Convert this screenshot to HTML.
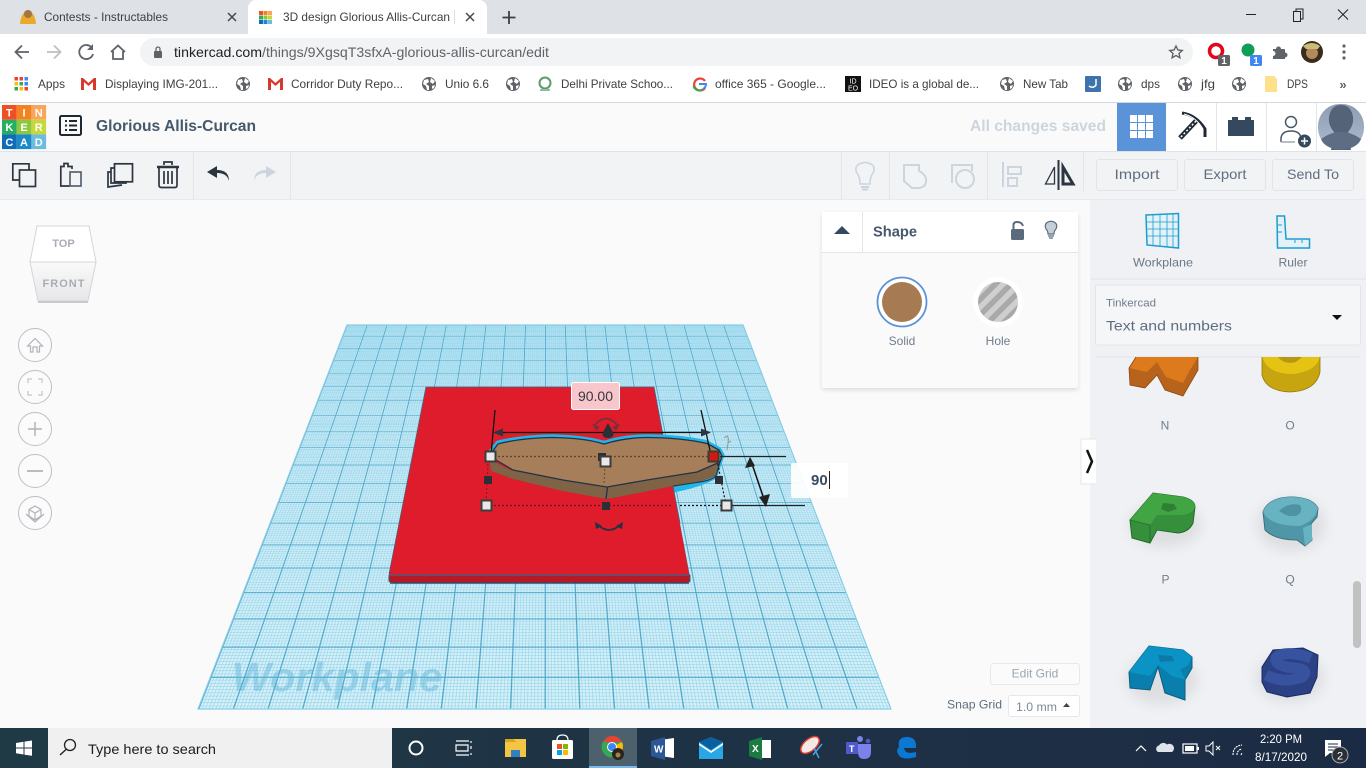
<!DOCTYPE html>
<html><head><meta charset="utf-8"><title>3D design Glorious Allis-Curcan | Tinkercad</title>
<style>
html,body{margin:0;padding:0;width:1366px;height:768px;overflow:hidden;background:#fafafa;font-family:"Liberation Sans",sans-serif}
.a{position:absolute}
#plane{left:0;top:0;width:1000px;height:1000px;transform-origin:0 0;
transform:matrix3d(0.396,0,0,0,-0.23386,0.08014,0,-0.0004286,0,0,1,0,347,325,0,1);
background-image:
linear-gradient(90deg,#4ea8ca 0,#4ea8ca 1.7px,transparent 1.7px),
linear-gradient(180deg,#4ea8ca 0,#4ea8ca 2.2px,transparent 2.2px),
linear-gradient(90deg,#97d5ea 0,#97d5ea 1.5px,transparent 1.5px),
linear-gradient(180deg,#97d5ea 0,#97d5ea 1.5px,transparent 1.5px),
linear-gradient(180deg,#acdff1 0,#c6e9f5 45%,#d8f1f9 100%);
background-size:50px 50px,50px 50px,5px 5px,5px 5px,1000px 1000px;}
svg{position:absolute;left:0;top:0}
text{font-family:"Liberation Sans",sans-serif}
</style></head><body>
<div class="a" style="left:0;top:0;width:1366px;height:34px;background:#dee1e6"></div>
<div class="a" style="left:0;top:34px;width:1366px;height:68px;background:#fff"></div>
<div class="a" style="left:248px;top:0;width:239px;height:35px;background:#fff;border-radius:8px 8px 0 0"></div>
<div class="a" style="left:140px;top:38px;width:1053px;height:28px;background:#f1f3f4;border-radius:14px"></div>
<div class="a" style="left:0;top:102px;width:1366px;height:1px;background:#d5d7da"></div>
<div class="a" style="left:0;top:103px;width:1366px;height:48px;background:#fafafa"></div>
<div class="a" style="left:0;top:151px;width:1366px;height:49px;background:#f2f3f5;border-top:1px solid #dfe2e7;border-bottom:1px solid #e8eaee;box-sizing:border-box"></div>
<div class="a" style="left:0;top:200px;width:1090px;height:528px;background:#fafafa;overflow:hidden">
<div class="a" style="left:0;top:-200px;width:1366px;height:768px;">
<div id="plane" class="a"></div></div></div>
<div class="a" style="left:1090px;top:200px;width:276px;height:528px;background:#f0f1f4"></div>
<svg width="1366" height="768" viewBox="0 0 1366 768" xmlns="http://www.w3.org/2000/svg">
<defs>
<g id="globe"><circle cx="0" cy="0" r="7" fill="#5f6368"/><path d="M-5-4 L-1-5 L0-2 L-3 0 L0 2 L0 6 L-2 6 L-3 2 L-6 0Z M2-6 L6-3 L4 0 L1-2Z M3 2 L6 1 L5 4 L3 5Z" fill="#fff"/></g>
<g id="gm"><rect x="0" y="0" width="15" height="12" fill="#fff"/><path d="M0 0 V12 H3 V4 L7.500 8 L12 4 V12 H15 V0 H13 L7.500 5 L2 0Z" fill="#d8392e"/></g>
<filter id="bl" x="-50%" y="-50%" width="200%" height="200%"><feGaussianBlur stdDeviation="7"/></filter>
<pattern id="hs" width="11" height="11" patternUnits="userSpaceOnUse" patternTransform="rotate(-45)"><rect width="11" height="11" fill="#cfcfcf"/><rect width="11" height="5.500" fill="#a9a9a9"/></pattern>
<linearGradient id="tb" x1="0" x2="1"><stop offset="0" stop-color="#203a45"/><stop offset="1" stop-color="#1c2b45"/></linearGradient>
<linearGradient id="av" x1="0" x2="0" y1="0" y2="1"><stop offset="0" stop-color="#8d9cb3"/><stop offset="1" stop-color="#aebccf"/></linearGradient>
<linearGradient id="cf" x1="0" x2="0" y1="0" y2="1"><stop offset="0" stop-color="#fafafa"/><stop offset="1" stop-color="#e6e6e8"/></linearGradient>
</defs>

<!-- tabs -->
<circle cx="28" cy="17" r="7" fill="#c9e4ef"/><path d="M20 24 Q21 12 28 11 Q35 12 36 24Z" fill="#e9a92b"/><circle cx="28" cy="14" r="4" fill="#a5743f"/>
<text x="44" y="21" font-size="12" fill="#3c4043" textLength="124" lengthAdjust="spacingAndGlyphs">Contests - Instructables</text>
<path d="M228 13 l8 8 m0-8 l-8 8" stroke="#45484c" stroke-width="1.500"/>
<g><rect x="259" y="11" width="4" height="4" fill="#f04e23"/><rect x="263.500" y="11" width="4" height="4" fill="#f58220"/><rect x="268" y="11" width="4" height="4" fill="#f9a65a"/><rect x="259" y="15.500" width="4" height="4" fill="#27ae60"/><rect x="263.500" y="15.500" width="4" height="4" fill="#8dc63f"/><rect x="268" y="15.500" width="4" height="4" fill="#c5d93a"/><rect x="259" y="20" width="4" height="4" fill="#0f6cb6"/><rect x="263.500" y="20" width="4" height="4" fill="#1c89c9"/><rect x="268" y="20" width="4" height="4" fill="#6cbce0"/></g>
<text x="283" y="21" font-size="12" fill="#3c4043" textLength="167" lengthAdjust="spacingAndGlyphs">3D design Glorious Allis-Curcan</text>
<rect x="454" y="10" width="1" height="14" fill="#f3dcc8"/>
<path d="M466 13 l8 8 m0-8 l-8 8" stroke="#45484c" stroke-width="1.500"/>
<path d="M509 11 v13 M502.500 17.500 h13" stroke="#3c4043" stroke-width="1.800"/>
<!-- window controls -->
<path d="M1246 14.500 h10" stroke="#222" stroke-width="1"/>
<path d="M1293.500 11.500 h7 v10 h-7z M1296 11.500 v-2.500 h7 v10 h-2.500" fill="none" stroke="#222"/>
<path d="M1338 9.500 l10 10 m0-10 l-10 10" stroke="#222" stroke-width="1"/>

<!-- nav -->
<path d="M29 52 H16 M22 45.500 L15.500 52 L22 58.500" fill="none" stroke="#5f6368" stroke-width="1.800"/>
<path d="M47 52 H60 M54 45.500 L60.500 52 L54 58.500" fill="none" stroke="#bcc0c4" stroke-width="1.800"/>
<path d="M92 48 A7 7 0 1 0 93 54" fill="none" stroke="#5f6368" stroke-width="1.800"/><path d="M93 44 v6 h-6z" fill="#5f6368"/>
<path d="M111 52 L118 45.500 L125 52 M113 51 V59 H123 V51" fill="none" stroke="#5f6368" stroke-width="1.800"/>
<rect x="154" y="51" width="8" height="7" rx="1" fill="#5f6368"/><path d="M156 51 v-2 a2 2 0 0 1 4 0 v2" fill="none" stroke="#5f6368" stroke-width="1.300"/>
<text x="174" y="57" font-size="14" fill="#202124" textLength="375" lengthAdjust="spacingAndGlyphs">tinkercad.com<tspan fill="#5f6368">/things/9XgsqT3sfxA-glorious-allis-curcan/edit</tspan></text>
<path d="M1176 46 l1.900 4 4.300.5 -3.200 2.900 .9 4.300 -3.900-2.200 -3.900 2.200 .9-4.300 -3.200-2.900 4.300-.5z" fill="none" stroke="#5f6368" stroke-width="1.400"/>
<circle cx="1216" cy="51" r="6.500" fill="none" stroke="#e0081a" stroke-width="3.500"/><rect x="1218" y="55" width="12" height="11" rx="1.500" fill="#5f6368"/><text x="1224" y="64" font-size="10" font-weight="bold" fill="#fff" text-anchor="middle">1</text>
<circle cx="1248" cy="50" r="6.500" fill="#0f9d58"/><rect x="1250" y="55" width="12" height="11" rx="1.500" fill="#4285f4"/><text x="1256" y="64" font-size="10" font-weight="bold" fill="#fff" text-anchor="middle">1</text>
<path d="M1273 49 h3 a2.500 2.500 0 0 1 5 0 h3 a1 1 0 0 1 1 1 v2.500 a2.500 2.500 0 0 1 0 5 v1.500 h-12 v-3 a2.500 2.500 0 0 0 0-5z" fill="#5f6368"/>
<circle cx="1312" cy="52" r="11" fill="#3a2c1a"/><circle cx="1312" cy="53" r="6" fill="#b48a5c"/><path d="M1303 46 q9-6 17 0 l-2 3 h-12z" fill="#c9bd7a"/>
<circle cx="1344" cy="46" r="1.600" fill="#5f6368"/><circle cx="1344" cy="52" r="1.600" fill="#5f6368"/><circle cx="1344" cy="58" r="1.600" fill="#5f6368"/>

<!-- bookmarks -->
<g><rect x="14.500" y="77" width="3.500" height="3.500" fill="#ea4335"/><rect x="19.500" y="77" width="3.500" height="3.500" fill="#ea4335"/><rect x="24.500" y="77" width="3.500" height="3.500" fill="#4285f4"/><rect x="14.500" y="82" width="3.500" height="3.500" fill="#fbbc04"/><rect x="19.500" y="82" width="3.500" height="3.500" fill="#34a853"/><rect x="24.500" y="82" width="3.500" height="3.500" fill="#4285f4"/><rect x="14.500" y="87" width="3.500" height="3.500" fill="#34a853"/><rect x="19.500" y="87" width="3.500" height="3.500" fill="#fbbc04"/><rect x="24.500" y="87" width="3.500" height="3.500" fill="#ea4335"/></g>
<g font-size="12" fill="#3c4043">
<text x="38" y="88" textLength="27" lengthAdjust="spacingAndGlyphs">Apps</text>
<text x="105" y="88" textLength="113" lengthAdjust="spacingAndGlyphs">Displaying IMG-201...</text>
<text x="291" y="88" textLength="112" lengthAdjust="spacingAndGlyphs">Corridor Duty Repo...</text>
<text x="445" y="88" textLength="44" lengthAdjust="spacingAndGlyphs">Unio 6.6</text>
<text x="561" y="88" textLength="112" lengthAdjust="spacingAndGlyphs">Delhi Private Schoo...</text>
<text x="715" y="88" textLength="111" lengthAdjust="spacingAndGlyphs">office 365 - Google...</text>
<text x="869" y="88" textLength="110" lengthAdjust="spacingAndGlyphs">IDEO is a global de...</text>
<text x="1023" y="88" textLength="45" lengthAdjust="spacingAndGlyphs">New Tab</text>
<text x="1141" y="88" textLength="19" lengthAdjust="spacingAndGlyphs">dps</text>
<text x="1201" y="88" textLength="14" lengthAdjust="spacingAndGlyphs">jfg</text>
<text x="1287" y="88" textLength="21" lengthAdjust="spacingAndGlyphs">DPS</text>
</g>
<use href="#gm" x="81" y="78"/><use href="#gm" x="268" y="78"/>
<use href="#globe" x="243" y="84"/><use href="#globe" x="429" y="84"/><use href="#globe" x="513" y="84"/><use href="#globe" x="1007" y="84"/><use href="#globe" x="1125" y="84"/><use href="#globe" x="1185" y="84"/><use href="#globe" x="1239" y="84"/>
<circle cx="545" cy="83" r="5.500" fill="none" stroke="#5a9c6a" stroke-width="2"/><path d="M540 90 h10" stroke="#8fc0a0" stroke-width="2"/>
<path d="M705 81 A6 6 0 1 0 705 88" fill="none" stroke="#ea4335" stroke-width="2.200"/><path d="M699 84 h7 a6 6 0 0 1-3 5" fill="none" stroke="#4285f4" stroke-width="2"/><path d="M693.500 86 a6 6 0 0 0 9 3.500" fill="none" stroke="#34a853" stroke-width="2"/>
<rect x="845" y="76" width="16" height="16" fill="#111"/><text x="853" y="83.500" font-size="7" fill="#fff" text-anchor="middle">ID</text><text x="853" y="90.500" font-size="7" fill="#fff" text-anchor="middle">EO</text>
<rect x="1085" y="76" width="16" height="16" rx="1" fill="#3d74ad"/><path d="M1089 86 q4 3 7-1 l0-6" fill="none" stroke="#fff" stroke-width="1.500"/>
<path d="M1265 76 h9 l3 3 v13 h-12z" fill="#fdd663" opacity=".75"/>
<text x="1343" y="89" font-size="13" font-weight="bold" fill="#5f6368" text-anchor="middle">»</text>

<!-- header -->
<g font-size="11" font-weight="bold" fill="#fff" text-anchor="middle">
<rect x="2" y="105" width="14.700" height="14.700" fill="#f04e23"/><rect x="16.700" y="105" width="14.700" height="14.700" fill="#f58220"/><rect x="31.400" y="105" width="14.700" height="14.700" fill="#f9a65a"/>
<rect x="2" y="119.700" width="14.700" height="14.700" fill="#27ae60"/><rect x="16.700" y="119.700" width="14.700" height="14.700" fill="#8dc63f"/><rect x="31.400" y="119.700" width="14.700" height="14.700" fill="#c5d93a"/>
<rect x="2" y="134.400" width="14.700" height="14.700" fill="#0f6cb6"/><rect x="16.700" y="134.400" width="14.700" height="14.700" fill="#1c89c9"/><rect x="31.400" y="134.400" width="14.700" height="14.700" fill="#6cbce0"/>
<text x="9.300" y="116.500">T</text><text x="24" y="116.500">I</text><text x="38.700" y="116.500">N</text>
<text x="9.300" y="131">K</text><text x="24" y="131">E</text><text x="38.700" y="131">R</text>
<text x="9.300" y="146">C</text><text x="24" y="146">A</text><text x="38.700" y="146">D</text></g>
<rect x="60" y="116" width="21" height="19" rx="1.500" fill="none" stroke="#1f2933" stroke-width="2"/>
<path d="M65 121 h2 m2 0 h8 M65 125.500 h2 m2 0 h8 M65 130 h2 m2 0 h8" stroke="#1f2933" stroke-width="2"/>
<text x="96" y="131" font-size="16" font-weight="bold" fill="#46586a" textLength="160" lengthAdjust="spacingAndGlyphs">Glorious Allis-Curcan</text>
<text x="970" y="131" font-size="16" font-weight="bold" fill="#ccd5dd" textLength="136" lengthAdjust="spacingAndGlyphs">All changes saved</text>
<rect x="1117" y="103" width="49" height="48" fill="#5b93d9"/>
<g fill="#fff"><rect x="1130" y="115" width="7" height="7"/><rect x="1138" y="115" width="7" height="7"/><rect x="1146" y="115" width="7" height="7"/><rect x="1130" y="123" width="7" height="7"/><rect x="1138" y="123" width="7" height="7"/><rect x="1146" y="123" width="7" height="7"/><rect x="1130" y="131" width="7" height="7"/><rect x="1138" y="131" width="7" height="7"/><rect x="1146" y="131" width="7" height="7"/></g>
<rect x="1167" y="103" width="49" height="48" fill="#fff"/><rect x="1217" y="103" width="49" height="48" fill="#fff"/><rect x="1267" y="103" width="49" height="48" fill="#fff"/><rect x="1317" y="103" width="49" height="48" fill="#fff"/>
<rect x="1216" y="103" width="1" height="48" fill="#e3e5e9"/><rect x="1266" y="103" width="1" height="48" fill="#e3e5e9"/><rect x="1316" y="103" width="1" height="48" fill="#e3e5e9"/>
<path d="M1182 113 Q1196 115 1205 129 L1205 137" fill="none" stroke="#1f2933" stroke-width="3"/>
<path d="M1184 114 Q1196 117 1203 129" fill="none" stroke="#fff" stroke-width="1"/>
<path d="M1196 121 L1180 138" stroke="#1f2933" stroke-width="5"/><path d="M1196 121 L1180 138" stroke="#fff" stroke-width="1.500" stroke-dasharray="2 2"/>
<path d="M1228 136 V120 H1232 V117 H1238 V120 H1245 V117 H1251 V120 H1254 V136Z" fill="#34495f"/>
<circle cx="1291" cy="122" r="5.500" fill="none" stroke="#46586a" stroke-width="1.500"/>
<path d="M1281 142 v-4 q1-7 10-7 q9 0 10 7" fill="none" stroke="#46586a" stroke-width="1.500"/><path d="M1281 142 h14" stroke="#9aa7b5" stroke-width="1.500"/>
<circle cx="1304.500" cy="141" r="6.500" fill="#34495f"/><path d="M1304.500 137.500 v7 M1301 141 h7" stroke="#fff" stroke-width="1.500"/>
<rect x="1318" y="104" width="46" height="46" rx="22" fill="url(#av)"/>
<path d="M1331 150 Q1334 136 1334 132 Q1328 125 1329 117 Q1331 105 1341 105 Q1351 105 1353 117 Q1354 125 1348 132 Q1348 136 1351 150Z" fill="#556378"/>
<path d="M1321 139 Q1328 134 1336 132 L1346 132 Q1354 134 1361 139 Q1358 148 1341 150 Q1324 148 1321 139Z" fill="#5e6d84"/>

<!-- toolbar -->
<g fill="#e3e5e9"><rect x="193" y="152" width="1" height="47"/><rect x="290" y="152" width="1" height="47"/><rect x="841" y="152" width="1" height="47"/><rect x="889" y="152" width="1" height="47"/><rect x="987" y="152" width="1" height="47"/><rect x="1083" y="152" width="1" height="39"/></g>
<g fill="none" stroke="#2c3640" stroke-width="1.700">
<path d="M29 170 V163.800 H12.800 V180 H19"/><rect x="19.500" y="170" width="16" height="16.500"/>
<path d="M72 169 V166.500 H68 V163.500 H64 V166.500 H60.800 V186 H70"/><rect x="70" y="172" width="11" height="14" stroke="#55626f"/>
<rect x="114.500" y="163.800" width="18" height="18"/><path d="M114.500 168 H111 V183 H126 V182 M111 172 H108 V187 L122 185"/>
<path d="M159 168 V185 Q159 187.500 161.500 187.500 H175 Q177 187.500 177 185 V168"/><path d="M157 167 H179" stroke-width="2.500"/><path d="M164 165 V162 H172 V165 M164 171 V184 M168 171 V184 M172 171 V184"/>
</g>
<path d="M229 181 Q227 173 217 173 V178 L207 172 L217 166 V170 Q229 170 229 181Z" fill="#2c3640"/>
<path d="M276 181 Q274 173 264 173 V178 L254 172 L264 166 V170 Q276 170 276 181Z" fill="#ccd5dd" transform="matrix(-1 0 0 1 530 0)"/>
<g fill="none" stroke="#ccd5dd" stroke-width="2">
<path d="M860 184 Q860 177 857 173 Q854 167 859 164 Q865 161 871 164 Q876 167 873 173 Q870 177 870 184Z" stroke-width="1.600"/><path d="M861 187 h8 M862 189.500 h6"/>
<path d="M904 165 H919 V171 Q927 175 926 182 Q925 188 917 188 H912 L904 181Z"/>
<path d="M952 183 V165 H972 V171"/><circle cx="965" cy="179" r="9"/>
<path d="M1003 162 V187" stroke-width="2"/><rect x="1008" y="167" width="13" height="7"/><rect x="1008" y="178" width="9" height="8"/>
</g>
<path d="M1058.500 160 V190" stroke="#2c3640" stroke-width="2"/>
<path d="M1054.500 167 L1045.500 184 H1054.500Z" fill="none" stroke="#2c3640" stroke-width="1.300"/><path d="M1063 167 L1073 184 H1063Z" fill="none" stroke="#2c3640" stroke-width="3"/>
<g fill="#f2f3f5" stroke="#e1e4e8"><rect x="1096.500" y="159.500" width="81" height="31" rx="3"/><rect x="1184.500" y="159.500" width="81" height="31" rx="3"/><rect x="1272.500" y="159.500" width="81" height="31" rx="3"/></g>
<g font-size="14" fill="#5f6f7f" text-anchor="middle"><text x="1137" y="179" textLength="45" lengthAdjust="spacingAndGlyphs">Import</text><text x="1225" y="179" textLength="43" lengthAdjust="spacingAndGlyphs">Export</text><text x="1313" y="179" textLength="52" lengthAdjust="spacingAndGlyphs">Send To</text></g>

<!-- canvas left -->
<path d="M347 325 H743 L891 709 H198Z" fill="none" stroke="#86cce5" stroke-width="1.200"/>
<text x="232" y="691" font-size="41" font-weight="bold" font-style="italic" fill="#5fb3d6" fill-opacity=".45" textLength="210" lengthAdjust="spacingAndGlyphs">Workplane</text>
<path d="M37 226 H89 L96 262 H30Z" fill="#fff" stroke="#d4d5d8"/><path d="M30 262 H96 L88 301 H38Z" fill="url(#cf)" stroke="#d4d5d8"/><path d="M38 302 H88" stroke="#c8c9cc" stroke-width="2"/>
<text x="63.500" y="247" font-size="11" font-weight="bold" fill="#a8adb5" text-anchor="middle">TOP</text>
<text x="63.500" y="287" font-size="11" font-weight="bold" fill="#a8adb5" text-anchor="middle" textLength="42">FRONT</text>
<g fill="#fbfbfb" stroke="#bcc0c6" stroke-width="1"><circle cx="35" cy="345" r="16.500"/><circle cx="35" cy="387" r="16.500"/><circle cx="35" cy="429" r="16.500"/><circle cx="35" cy="471" r="16.500"/><circle cx="35" cy="513" r="16.500"/></g>
<g fill="none" stroke="#b0b4ba" stroke-width="1.200">
<path d="M27.500 346 L35 338.500 L42.500 346 H39.500 V352 H37 V347 H33 V352 H30.500 V346Z"/>
<path d="M28 383 v-4 h4 M38 379 h4 v4 M42 391 v4 h-4 M32 395 h-4 v-4" stroke-width="1.500" stroke="#ccd0d5"/>
<path d="M28 429 H42 M35 422 V436" stroke-width="1.500"/><path d="M27 471 H43" stroke-width="1.800"/>
<path d="M35 506 L41 509.500 V516 L35 520 L29 516 V509.500Z M29 509.500 L35 513 L41 509.500 M35 513 V520 M26 514 L35 522 L44 514"/>
</g>

<!-- plate -->
<path d="M389 574 L389 581 L392 583 H688 L690 581 L690 574Z" fill="#b71826"/>
<path d="M426 387 H654 L689 574 H389Z" fill="#de1c2c"/>
<path d="M426 387 H654 M654 387 L689 574 M426 387 L389 574" fill="none" stroke="#4a6080" stroke-width=".8"/>
<path d="M389 575 H690" stroke="#5c5a78" stroke-width="1.500"/>
<path d="M390 583 H689" stroke="#2f4a68" stroke-width="1.500"/>
<path d="M389 575 V581 L391 583 M690 575 V581 L688 583" fill="none" stroke="#3c5a78"/>

<!-- heart -->
<path d="M487 454 L497 441.500 Q520 435.500 553 435 Q585 436 604 441.500 Q625 435 647 435 Q680 435 707 441 L720 448 L724 455 L720 466 L716 478 Q705 484 690 488 L673 492 L673 480 L620 470 L500 460Z" fill="#20b7e8" stroke="#20b7e8" stroke-width="1.500"/>
<path d="M489 459 L491 471 L513 479 L563 491 L607 499 L673 487 L700 482 L716 476 L720 461 L700 470 L650 480 L607 486 L560 478 L510 470Z" fill="#7e6346"/>
<path d="M673 486 L689 574 L660 574 L600 540 L608 499Z" fill="#de1c2c"/>
<path d="M673 486 L680 523" stroke="#4a6080" stroke-width=".8"/>
<path d="M489 456 L498 444 Q520 438 553 437.500 Q585 438 604 444 Q625 437.500 647 437.500 Q680 437.500 707 443.500 L719 450 L722 456 L720 462 L697 472 L647 480 L607 487 L563 480 L513 470 Z" fill="#a67e5a" stroke="#243247" stroke-width="1.300"/>
<path d="M607.500 487 L606 499" stroke="#243247" stroke-width="1.300"/>
<path d="M673 486 L700 482 Q712 480 716 476 L720 462" fill="none" stroke="#243247" stroke-width="1"/>

<!-- gizmo -->
<g fill="none">
<path d="M490 456.500 H713" stroke="#5b4630" stroke-width="1.200" stroke-dasharray="2 2"/>
<path d="M490 505.500 H604" stroke="#5a1820" stroke-width="1.200" stroke-dasharray="2 2"/>
<path d="M609 505.500 H672" stroke="#5a1820" stroke-width="1.200" stroke-dasharray="2 2"/>
<path d="M680 505.500 H726" stroke="#111" stroke-width="1.200" stroke-dasharray="2 2"/>
<path d="M488 460 L486 505" stroke="#8a2028" stroke-width="1.200" stroke-dasharray="2 2"/>
<path d="M717 460 L726 505" stroke="#111" stroke-width="1.200" stroke-dasharray="2 2"/>
<path d="M605 465 L604 485" stroke="#6a5338" stroke-width="1.200" stroke-dasharray="2 2"/>
<path d="M495 410 L491 455 M701 410 L711 455" stroke="#111" stroke-width="1.300"/>
<path d="M495 432.500 H709" stroke="#111" stroke-width="1.300"/>
<path d="M720 456.500 H786 M730 505.500 H805" stroke="#222" stroke-width="1.300"/>
<path d="M750 458 L766 505" stroke="#111" stroke-width="1.500"/>
<path d="M594 426 Q606 411 618 426" stroke="#7d2f38" stroke-width="1.800"/>
<path d="M597 524 Q609 536 621 524" stroke="#26323f" stroke-width="1.700"/>
<path d="M727 450 L728 443 Q729 437 727 436 L724 438 M728 443 L731 441" stroke="#8e949c" stroke-width="1"/>
</g>
<path d="M493 432.500 L503 428.500 V436.500Z M711 432.500 L701 428.500 V436.500Z" fill="#2b3642"/>
<path d="M750 457 L745 468 L755 466Z M766 507 L759 497 L770 494Z" fill="#222"/>
<path d="M592 424 L596 431 L600 427Z M620 424 L616 431 L612 427Z" fill="#7d2f38"/><path d="M595 522 L596 529 L602 526Z M623 522 L622 529 L616 526Z" fill="#26323f"/>
<path d="M608 423 L613.500 433 Q614 438 608 438 Q602 438 602.500 433Z" fill="#2c3036"/>
<rect x="484" y="476" width="8" height="8" fill="#2c3036"/><rect x="715" y="476" width="8" height="8" fill="#2c3036"/><rect x="602" y="502" width="8" height="8" fill="#2c3036"/><rect x="598" y="453" width="8" height="8" fill="#2c3036"/>
<g fill="#e8e8e8" stroke="#3c3c3c" stroke-width="2"><rect x="485.500" y="451.500" width="10" height="10"/><rect x="600.500" y="456.500" width="10" height="10"/><rect x="481.500" y="500.500" width="10" height="10"/><rect x="721.500" y="500.500" width="10" height="10"/></g>
<rect x="708.500" y="451.500" width="10" height="10" fill="#d4190e" stroke="#3c3c3c" stroke-width="2"/>
<rect x="571.500" y="382.500" width="48" height="27" rx="2" fill="#f8c6cb" stroke="#fff"/>
<text x="595.500" y="401" font-size="14" fill="#333a44" text-anchor="middle">90.00</text>
<rect x="791" y="463" width="57" height="35" rx="2" fill="#fff" fill-opacity=".92"/>
<text x="811" y="485" font-size="15" font-weight="bold" fill="#3c4c5f">90</text><rect x="829" y="471" width="1" height="18" fill="#222"/>

<!-- shape panel -->
<rect x="822" y="214" width="256" height="176" rx="2" fill="#000" opacity=".12" style="filter:blur(2px)"/>
<rect x="822" y="212" width="256" height="176" rx="2" fill="#fafafa"/>
<path d="M822 252 V214 Q822 212 824 212 H1076 Q1078 212 1078 214 V252Z" fill="#fff"/>
<path d="M822 252.500 H1078" stroke="#e3e5e9"/><path d="M862.500 212 V252" stroke="#e3e5e9"/>
<path d="M834 234 L842 226 L850 234Z" fill="#34495f"/>
<text x="873" y="236.500" font-size="14.500" font-weight="bold" fill="#46586a" textLength="44" lengthAdjust="spacingAndGlyphs">Shape</text>
<rect x="1011" y="229" width="13" height="11" rx="1.500" fill="#5a6b7d"/><path d="M1013.500 229 V225 Q1013.500 222 1017 222 Q1022 222 1023 226" fill="none" stroke="#5a6b7d" stroke-width="2"/>
<path d="M1048 234 Q1048 231 1046 229 Q1044 225 1047 222.500 Q1051 220 1055 222.500 Q1058 225 1056 229 Q1054 231 1054 234Z" fill="#c5cdd6" stroke="#5a6b7d" stroke-width="1.200"/><path d="M1048 236 h6 M1049 238 h4" stroke="#5a6b7d" stroke-width="1.200"/>
<circle cx="902" cy="302" r="24.500" fill="#fff" stroke="#5b93d9" stroke-width="1.800"/><circle cx="902" cy="302" r="20" fill="#a67a52"/>
<circle cx="998" cy="302" r="25" fill="#fff"/><circle cx="998" cy="302" r="20" fill="url(#hs)"/>
<text x="902" y="345" font-size="12" fill="#6f7d8b" text-anchor="middle">Solid</text><text x="998" y="345" font-size="12" fill="#6f7d8b" text-anchor="middle">Hole</text>

<!-- bottom canvas controls -->
<rect x="990.500" y="663.500" width="89" height="21" rx="3" fill="#fbfbfb" stroke="#e6e8ec"/>
<text x="1035" y="677.500" font-size="12" fill="#9ba6b3" text-anchor="middle">Edit Grid</text>
<text x="947" y="708.500" font-size="12" fill="#5f6f7f" textLength="55" lengthAdjust="spacingAndGlyphs">Snap Grid</text>
<rect x="1008.500" y="695.500" width="71" height="21" rx="2" fill="#fff" stroke="#e6e8ec"/>
<text x="1016" y="711" font-size="12" fill="#7d8995" textLength="41" lengthAdjust="spacingAndGlyphs">1.0 mm</text>
<path d="M1063 707 L1066.500 703 L1070 707Z" fill="#444"/>
<!-- collapse tab -->
<path d="M1096 439 H1081 V484 H1096" fill="#fff" stroke="#e3e5e9"/>
<path d="M1087 450 L1092 461.500 L1087 473" fill="none" stroke="#111" stroke-width="2.500"/>

<!-- right panel -->
<path d="M1090 279 H1366 M1095 357 H1360" stroke="#dfe2e7"/>
<g fill="none" stroke="#1d9ccf" stroke-width="1.500">
<path d="M1146 215 L1178.500 213.500 V248 L1147 245Z" fill="#e2f2f8"/>
<path d="M1146 222 H1178 M1146.500 229 H1178 M1147 236 H1178 M1153 214.500 V246 M1160 214 V246.500 M1167 214 V247 M1173 214 V247.500" stroke-width=".8"/>
<path d="M1277 216 H1284.500 L1286 239 H1309.500 V248 H1277.500Z" fill="#e2f2f8"/>
<path d="M1278 225 h4 M1278 232 h4 M1295 240 v3 M1302 240 v3" stroke-width="1"/>
</g>
<g font-size="12" fill="#6a7886" text-anchor="middle"><text x="1163" y="266.500" textLength="60" lengthAdjust="spacingAndGlyphs">Workplane</text><text x="1293" y="266.500" textLength="29" lengthAdjust="spacingAndGlyphs">Ruler</text></g>
<rect x="1095.500" y="285" width="265" height="60" rx="2" fill="#f5f6f8" stroke="#e3e5e9"/>
<text x="1106" y="306.500" font-size="11" fill="#6f7d8b" textLength="50" lengthAdjust="spacingAndGlyphs">Tinkercad</text>
<text x="1106" y="330.500" font-size="14" fill="#5f6f7f" textLength="126" lengthAdjust="spacingAndGlyphs">Text and numbers</text>
<path d="M1332 315 H1342 L1337 320Z" fill="#111"/>

<!-- letters -->
<g>
<path d="M1129 368 L1136 357 H1198 V370 L1183 396 L1165 390 L1157 375 L1145 388 L1130 385Z" fill="#b8631b"/>
<path d="M1129 368 L1136 357 H1198 L1190 370 L1183 383 L1166 377 L1157 362 L1147 372Z" fill="#dc7a1c"/>
<path d="M1129 368 L1136 357 M1198 357 V370 L1183 396 L1165 390 L1157 375 L1145 388 L1130 385 L1129 368" fill="none" stroke="#8a4a12" stroke-width=".8"/>
<path d="M1262 357 V375 Q1266 391 1290 392 Q1316 391 1320 372 V357Z" fill="#c7a510"/>
<path d="M1262 357 Q1268 374 1292 374 Q1316 372 1320 357Z" fill="#e4c313"/>
<path d="M1278 357 Q1284 365 1296 362 L1302 357Z" fill="#b89810"/>
<path d="M1262 357 V375 Q1266 391 1290 392 Q1316 391 1320 372 V357" fill="none" stroke="#94790f" stroke-width=".8"/>
<ellipse cx="1165" cy="525" rx="36" ry="22" fill="#000" opacity=".08" filter="url(#bl)"/>
<ellipse cx="1291" cy="525" rx="34" ry="26" fill="#000" opacity=".08" filter="url(#bl)"/>
<ellipse cx="1162" cy="680" rx="36" ry="24" fill="#000" opacity=".08" filter="url(#bl)"/>
<ellipse cx="1290" cy="678" rx="34" ry="24" fill="#000" opacity=".08" filter="url(#bl)"/>
<!-- P -->
<path d="M1130 520 L1153 493 L1183 497 Q1195 500 1195 507 L1193 523 Q1189 532 1178 533 L1157 530 L1150 543 L1132 538Z" fill="#368f3a" stroke="#23692a" stroke-width="1"/>
<path d="M1130 520 L1153 493 L1183 497 Q1195 500 1195 507 Q1193 515 1178 515 L1157 515 L1150 525Z" fill="#42a544"/>
<path d="M1130 520 L1150 525 L1150 543" fill="none" stroke="#23692a" stroke-width=".8"/>
<path d="M1163 503 L1174 504 L1177 509 L1168 512 L1161 509Z" fill="#2f7f35"/>
<!-- Q -->
<path d="M1263 512 Q1268 498 1290 497 Q1312 497 1318 508 L1317 517 L1310 525 L1312 540 L1305 546 L1297 540 Q1275 540 1265 530Z" fill="#4f97a6" stroke="#396f7d" stroke-width="1"/>
<path d="M1263 512 Q1268 498 1290 497 Q1312 497 1318 508 Q1316 520 1300 526 Q1270 526 1263 512Z" fill="#68b3c2"/>
<path d="M1279 511 Q1288 502 1300 505 Q1304 512 1296 516 L1289 516 L1284 514Z" fill="#4e93a2"/>
<path d="M1303 528 L1312 524 L1312 540 L1305 546Z" fill="#68b3c2"/>
<!-- R -->
<path d="M1129 672 L1149 646 L1183 650 L1192 657 L1192 668 L1185 680 L1185 700 L1165 693 L1158 667 L1150 690 L1130 688Z" fill="#0a7fae" stroke="#0a5c80" stroke-width="1"/>
<path d="M1129 672 L1149 646 L1183 650 L1192 657 L1188 665 L1180 670 L1186 680 L1172 676 L1158 665 L1150 676Z" fill="#0b93c6"/>
<path d="M1158 655 L1172 656 L1174 661 L1160 662Z" fill="#0a7aa6"/>
<!-- S -->
<path d="M1262 667 L1273 650 L1303 648 L1318 655 L1317 677 L1310 693 L1287 697 L1267 692 L1262 682Z" fill="#2b4184" stroke="#1a2a62" stroke-width="1"/>
<path d="M1311 658 Q1284 649 1276 658 Q1275 667 1296 668 Q1310 670 1302 677 Q1284 684 1266 675" fill="none" stroke="#37529f" stroke-width="11"/>
<text x="1165" y="429.500" font-size="12" fill="#6f7d8b" text-anchor="middle">N</text>
<text x="1290" y="429.500" font-size="12" fill="#6f7d8b" text-anchor="middle">O</text>
<text x="1165.500" y="583.500" font-size="12" fill="#6f7d8b" text-anchor="middle">P</text>
<text x="1290" y="583.500" font-size="12" fill="#6f7d8b" text-anchor="middle">Q</text>
</g>
<rect x="1353" y="581" width="8" height="67" rx="4" fill="#c1c1c1"/>

<!-- taskbar -->
<rect x="0" y="728" width="1366" height="40" fill="url(#tb)"/>
<g fill="#fff"><path d="M16 743 L23.500 741.800 V747.500 H16Z M24.500 741.600 L32 740.500 V747.500 H24.500Z M16 748.500 H23.500 V754.500 L16 753.300Z M24.500 748.500 H32 V755.800 L24.500 754.700Z"/></g>
<rect x="48" y="728" width="344" height="40" fill="#f0f0f0"/>
<circle cx="70" cy="745" r="5.500" fill="none" stroke="#222" stroke-width="1.300"/><path d="M66 749.500 L60 755" stroke="#222" stroke-width="1.400"/>
<text x="88" y="754" font-size="14" fill="#1c1c1c" textLength="128" lengthAdjust="spacingAndGlyphs">Type here to search</text>
<circle cx="416" cy="748" r="6.500" fill="none" stroke="#fff" stroke-width="2"/>
<path d="M456 741 H469 M456 755 H469 M456 745 H468 V751 H456Z M471 741 v2 M471 746 v3 M471 753 v2" fill="none" stroke="#fff" stroke-width="1.200"/>
<rect x="505" y="739" width="21" height="18" fill="#f4c542"/><path d="M505 739 H514 L516 742 H505Z" fill="#d9a520"/><rect x="511" y="750" width="9" height="7" fill="#2f7fc1"/>
<rect x="552" y="740" width="21" height="19" rx="1.500" fill="#fff"/><path d="M557 740 Q557 735 562.500 735 Q568 735 568 740" fill="none" stroke="#fff" stroke-width="1.200"/>
<rect x="557" y="744" width="5" height="5" fill="#f25022"/><rect x="563" y="744" width="5" height="5" fill="#7fba00"/><rect x="557" y="750" width="5" height="5" fill="#00a4ef"/><rect x="563" y="750" width="5" height="5" fill="#ffb900"/>
<rect x="589" y="728" width="48" height="40" fill="#4d616c"/><rect x="589" y="766" width="48" height="2" fill="#76b9ed"/>
<circle cx="612" cy="747" r="10.500" fill="#34a853"/><path d="M603 742 A10.500 10.500 0 0 1 622 742 H612Z" fill="#ea4335"/><path d="M622 742 A10.500 10.500 0 0 1 613 757 L612 747Z" fill="#fbbc04"/><circle cx="612" cy="747" r="4.500" fill="#4285f4" stroke="#fff"/><circle cx="618" cy="754" r="6" fill="#2c2418"/><circle cx="618" cy="755" r="2.500" fill="#a5814f"/>
<path d="M660 740 L674 738 V758 L660 756Z" fill="#fff"/><path d="M651 741 L665 737 V760 L651 756Z" fill="#2b5797"/><text x="654" y="752.500" font-size="10" font-weight="bold" fill="#fff">W</text>
<path d="M699 742 L711 737 L723 742 V759 H699Z" fill="#29a6e5"/><path d="M699 742 L711 750 L723 742 L711 737Z" fill="#0a5f9e"/><path d="M699 743 L711 751 L723 743 L723 745 L711 753 L699 745Z" fill="#fff"/>
<path d="M758 740 H771 V758 H758Z" fill="#fff"/><path d="M749 741 L762 737 V760 L749 756Z" fill="#1b7b43"/><text x="752" y="752" font-size="10" font-weight="bold" fill="#fff">X</text>
<ellipse cx="810" cy="745" rx="11" ry="6" fill="#f1e9e2" stroke="#d33" stroke-width="1.500" transform="rotate(-40 810 745)"/><path d="M814 748 L819 758 M822 744 L813 755" stroke="#4aa3df" stroke-width="1.500"/>
<rect x="846" y="742" width="12" height="12" fill="#5059c9"/><text x="849" y="752" font-size="9" font-weight="bold" fill="#fff">T</text><path d="M858 744 H871 V752 Q871 759 864 759 Q858 759 858 752Z" fill="#7b83eb"/><circle cx="860" cy="739" r="3" fill="#7b83eb"/><circle cx="868" cy="741" r="2.300" fill="#5059c9"/>
<path d="M899 747 Q897 737 907 737 Q917 737 916 748 H904 Q905 755 916 752 V757 Q898 762 897 750 Z" fill="#0b78d4"/>
<path d="M1136 751 L1141 746 L1146 751" fill="none" stroke="#fff" stroke-width="1.200"/>
<path d="M1158 752 a3.500 3.500 0 0 1 1-6.500 a5 5 0 0 1 8-1 a4 4 0 0 1 5 7.500Z" fill="#dfe4ea"/>
<rect x="1183" y="744" width="14" height="9" fill="#1c2b45" stroke="#fff" stroke-width="1.200"/><rect x="1185" y="746" width="9" height="5" fill="#fff"/><rect x="1197.500" y="747" width="1.500" height="3" fill="#fff"/>
<path d="M1206 746 h3 l4-4 v13 l-4-4 h-3z" fill="none" stroke="#fff"/><path d="M1216 746 l4 4 m0-4 l-4 4" stroke="#fff"/>
<path d="M1233 755 q0-9 9-10 M1237 755 q0-5 5-6 M1241 755 l1-2" fill="none" stroke="#fff" stroke-width="1.100" stroke-dasharray="2 .8"/>
<text x="1281" y="743" font-size="12" fill="#fff" text-anchor="middle" textLength="42" lengthAdjust="spacingAndGlyphs">2:20 PM</text>
<text x="1281" y="761" font-size="12" fill="#fff" text-anchor="middle" textLength="52" lengthAdjust="spacingAndGlyphs">8/17/2020</text>
<path d="M1325 740 H1341 V753 H1330 L1325 757Z" fill="#fff"/><path d="M1328 744 H1338 M1328 747 H1338 M1328 750 H1335" stroke="#1c2b45"/>
<circle cx="1340" cy="755" r="8" fill="#2c2f36" stroke="#aaa"/><text x="1340" y="759.500" font-size="11" fill="#fff" text-anchor="middle">2</text>
</svg>
</body></html>
